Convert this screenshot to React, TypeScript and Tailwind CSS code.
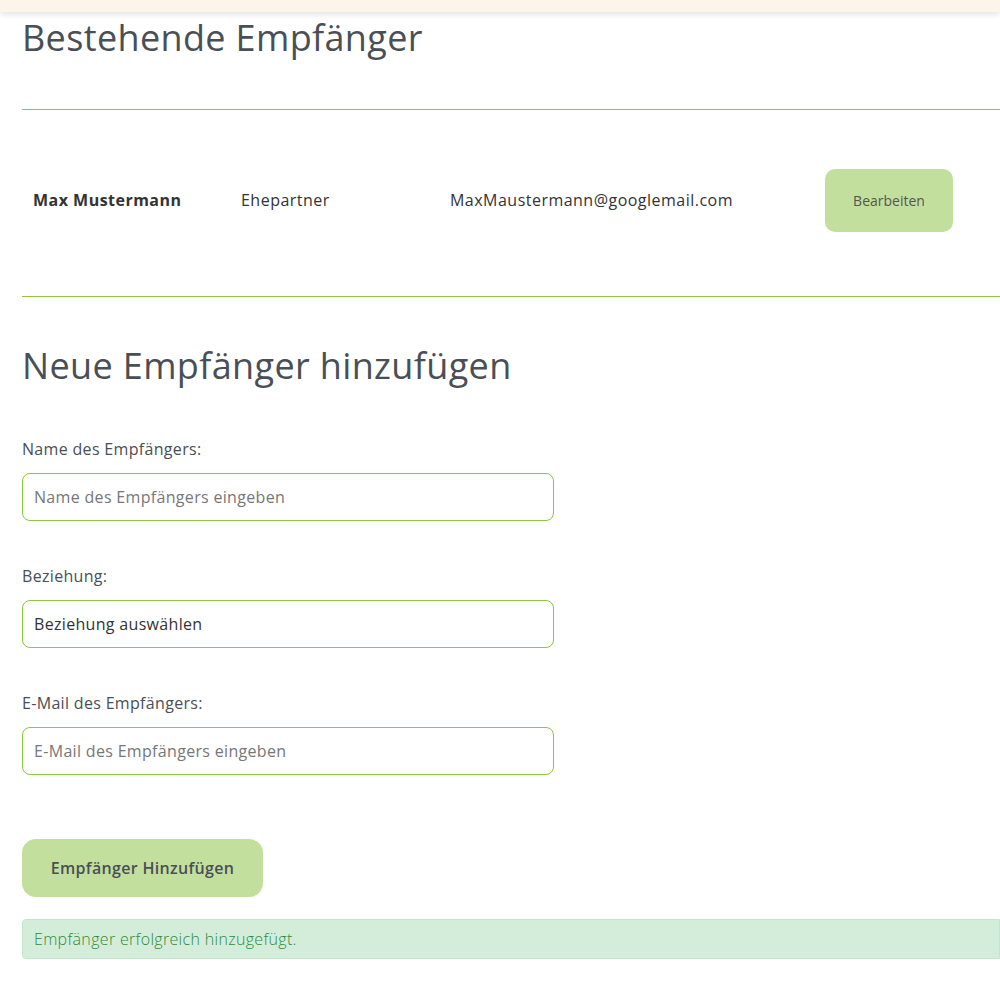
const font = { fontFamily: '"Open Sans", "Liberation Sans", sans-serif' }

const Field = ({ label, placeholder, filled }: { label: string; placeholder: string; filled?: boolean }) => (
  <div className="flex flex-col">
    <label className="mb-[14px] h-[20px] text-[16px] font-medium leading-[20px] tracking-[0.02em] text-[#4a4f55]">{label}</label>
    <div
      className={`flex h-[48px] w-[532px] items-center rounded-[8px] border border-[#8cc63f] px-[11px] text-[16px] tracking-[0.02em] ${
        filled ? 'text-[#333]' : 'text-[#777]'
      }`}
    >
      {placeholder}
    </div>
  </div>
)

export default function App() {
  return (
    <div className="min-h-[1000px] w-[1000px] overflow-hidden bg-white" style={font}>
      <div className="h-[12px] bg-[#fdf5ea] shadow-[0_2px_6px_rgba(0,0,0,0.12)]" />
      <div className="pl-[22px]">
        <h1 className="mt-[6px] h-[40px] text-[36px] leading-[40px] tracking-[0.01em] text-[#4a4f55]">Bestehende Empfänger</h1>
        <div className="mt-[51px] border-t border-[#8cc63f]" />
        <div className="flex h-[186px] items-center pb-[6px] text-[16px] tracking-[0.03em] text-[#333]">
          <div className="w-[219px] pl-[11px] font-bold">Max Mustermann</div>
          <div className="w-[209px]">Ehepartner</div>
          <div className="w-[375px]">MaxMaustermann@googlemail.com</div>
          <div className="flex h-[63px] w-[128px] items-center justify-center rounded-[10px] bg-[#c3df9e] text-[14px] tracking-normal text-[#555]">
            Bearbeiten
          </div>
        </div>
        <div className="border-t border-[#8cc63f]" />
        <h2 className="mt-[47px] h-[44px] text-[36px] leading-[44px] tracking-[0.01em] text-[#4a4f55]">Neue Empfänger hinzufügen</h2>
        <div className="mt-[51px] flex flex-col gap-[45px]">
          <Field label="Name des Empfängers:" placeholder="Name des Empfängers eingeben" />
          <Field label="Beziehung:" placeholder="Beziehung auswählen" filled />
          <Field label="E-Mail des Empfängers:" placeholder="E-Mail des Empfängers eingeben" />
        </div>
        <div className="mt-[64px] flex h-[58px] w-[241px] items-center justify-center rounded-[14px] bg-[#c3df9e] text-[16px] font-semibold tracking-[0.02em] text-[#4a4f55]">
          Empfänger Hinzufügen
        </div>
        <div className="mt-[22px] flex h-[40px] items-center rounded-l-[4px] border border-[#c3e6cb] bg-[#d4eddb] pl-[11px] text-[16px] font-light tracking-[0.02em] text-[#2e8b3a]">
          Empfänger erfolgreich hinzugefügt.
        </div>
      </div>
    </div>
  )
}
